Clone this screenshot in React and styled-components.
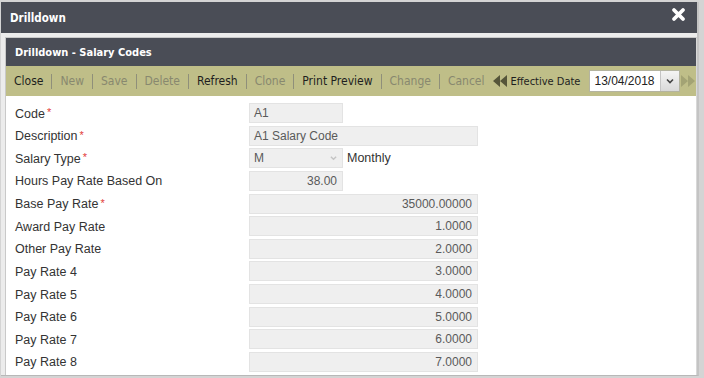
import React from 'react';
import styled, { createGlobalStyle } from 'styled-components';

const GlobalStyle = createGlobalStyle`
  html, body {
    margin: 0;
    padding: 0;
    background: #dcdcdc;
    overflow: hidden;
  }
`;

const Page = styled.div`
  width: 704px;
  height: 378px;
  padding: 2px 0 0 1px;
  box-sizing: border-box;
  background: #d4d4d4;
`;

const Dialog = styled.div`
  width: 698px;
  height: 374px;
  display: flex;
  flex-direction: column;
  background: #ececec;
  border-right: 2px solid #c4c4c4;
  border-bottom: 1px solid #b8b8b8;
  box-sizing: border-box;
`;

const TitleBar = styled.div`
  height: 31px;
  flex: none;
  display: flex;
  align-items: center;
  justify-content: space-between;
  padding: 0 11px 0 9px;
  background: #4a4d56;
  color: #fff;
  font: bold 11.5px "DejaVu Sans Condensed", "DejaVu Sans", sans-serif;
`;

const CloseButton = styled.svg`
  width: 15px;
  height: 15px;
  margin-top: -6px;
`;

const Body = styled.div`
  flex: 1;
  display: flex;
  padding: 4px 0 0 4px;
  min-height: 0;
`;

const Panel = styled.div`
  flex: 1;
  min-width: 0;
  display: flex;
  flex-direction: column;
  background: #fff;
  border: 1px solid #c9c9c9;
  border-bottom: none;
  border-right: 1px solid #d8d8d8;
`;

const PanelHeader = styled.div`
  height: 28px;
  flex: none;
  display: flex;
  align-items: center;
  padding-left: 9px;
  background: #4a4d56;
  color: #fff;
  font: bold 11px "DejaVu Sans Condensed", "DejaVu Sans", sans-serif;
`;

const Toolbar = styled.div`
  height: 30px;
  flex: none;
  display: flex;
  align-items: center;
  padding-left: 8px;
  overflow: hidden;
  white-space: nowrap;
  background: #bfbe88;
  font: 12px "DejaVu Sans Condensed", "DejaVu Sans", sans-serif;

  & > * {
    flex: none;
  }
`;

const ToolButton = styled.span`
  color: ${p => (p.$disabled ? '#88886f' : '#1e1e1e')};
  padding: 0 8px 0 0;
`;

const Separator = styled.span`
  width: 1px;
  height: 15px;
  background: #8f8f7a;
  margin-right: 8px;
`;

const NavArrow = styled.svg`
  width: 14px;
  height: 12px;
  margin-left: ${p => p.$gap}px;
`;

const DateLabel = styled.span`
  font-size: 11px;
  color: #1e1e1e;
  margin: 0 9px 0 3px;
`;

const DateBox = styled.div`
  display: flex;
  height: 22px;
  border: 1px solid #b4b4a0;
  background: #fff;
  box-sizing: border-box;
  margin-right: 1px;
`;

const DateText = styled.span`
  width: 66px;
  padding-left: 4px;
  display: flex;
  align-items: center;
  font: 12px "Liberation Sans", Arial, sans-serif;
  color: #222;
`;

const DateButton = styled.span`
  width: 18px;
  display: flex;
  align-items: center;
  justify-content: center;
  background: linear-gradient(#f4f4f4, #d9d9d9);
  border-left: 1px solid #c4c4c4;
`;

const Form = styled.div`
  display: grid;
  grid-template-columns: 234px 1fr;
  grid-auto-rows: 20px;
  row-gap: 2.64px;
  padding: 7px 0 0 9px;
  font: 12.5px "Liberation Sans", Arial, sans-serif;
  color: #333;
`;

const Label = styled.div`
  display: flex;
  align-items: center;
  margin-top: 1px;
`;

const Required = styled.span`
  color: #e23b3b;
  font-size: 11px;
  margin-left: 2px;
  align-self: flex-start;
  margin-top: 2px;
`;

const Field = styled.div`
  display: flex;
  align-items: center;
`;

const Input = styled.div`
  width: ${p => (p.$wide ? 229 : 94)}px;
  height: 20px;
  box-sizing: border-box;
  display: flex;
  align-items: center;
  justify-content: ${p => (p.$right ? 'flex-end' : 'space-between')};
  padding: 0 5px 0 4px;
  background: #efefef;
  border: 1px solid #e3e3e3;
  color: #5a5a5a;
  font-size: 12px;
`;

const Caption = styled.span`
  margin-left: 4px;
  color: #333;
`;

const Chevron = ({ color, width = 8 }) => (
  <svg width={width} height="6" viewBox="0 0 8 6">
    <path d="M1 1.5 L4 4.5 L7 1.5" fill="none" stroke={color} strokeWidth="1.6" />
  </svg>
);

const DoubleArrow = ({ dir, color, gap = 0 }) => (
  <NavArrow viewBox="0 0 14 12" $gap={gap}>
    {dir === 'left' ? (
      <path d="M7 0 L0 6 L7 12 Z M14 0 L7 6 L14 12 Z" fill={color} />
    ) : (
      <path d="M0 0 L7 6 L0 12 Z M7 0 L14 6 L7 12 Z" fill={color} />
    )}
  </NavArrow>
);

const tools = [
  ['Close', false],
  ['New', true],
  ['Save', true],
  ['Delete', true],
  ['Refresh', false],
  ['Clone', true],
  ['Print Preview', false],
  ['Change', true],
  ['Cancel', true],
];

const rates = [
  ['Base Pay Rate', '35000.00000', true],
  ['Award Pay Rate', '1.0000'],
  ['Other Pay Rate', '2.0000'],
  ['Pay Rate 4', '3.0000'],
  ['Pay Rate 5', '4.0000'],
  ['Pay Rate 6', '5.0000'],
  ['Pay Rate 7', '6.0000'],
  ['Pay Rate 8', '7.0000'],
];

const FieldLabel = ({ children, required }) => (
  <Label>
    {children}
    {required && <Required>*</Required>}
  </Label>
);

export default function App() {
  return (
    <Page>
      <GlobalStyle />
      <Dialog>
        <TitleBar>
          <span>Drilldown</span>
          <CloseButton viewBox="0 0 15 15">
            <path d="M3 3 L12 12 M12 3 L3 12" stroke="#fff" strokeWidth="3.8" strokeLinecap="round" />
          </CloseButton>
        </TitleBar>
        <Body>
          <Panel>
            <PanelHeader>Drilldown - Salary Codes</PanelHeader>
            <Toolbar>
              {tools.map(([name, disabled], i) => (
                <React.Fragment key={name}>
                  {i > 0 && <Separator />}
                  <ToolButton $disabled={disabled}>{name}</ToolButton>
                </React.Fragment>
              ))}
              <DoubleArrow dir="left" color="#55553a" gap={1} />
              <DateLabel>Effective Date</DateLabel>
              <DateBox>
                <DateText>13/04/2018</DateText>
                <DateButton>
                  <Chevron color="#444" />
                </DateButton>
              </DateBox>
              <DoubleArrow dir="right" color="#a3a374" />
            </Toolbar>
            <Form>
              <FieldLabel required>Code</FieldLabel>
              <Field>
                <Input>A1</Input>
              </Field>
              <FieldLabel required>Description</FieldLabel>
              <Field>
                <Input $wide>A1 Salary Code</Input>
              </Field>
              <FieldLabel required>Salary Type</FieldLabel>
              <Field>
                <Input>
                  M
                  <Chevron color="#c4c4c4" width={7} />
                </Input>
                <Caption>Monthly</Caption>
              </Field>
              <FieldLabel>Hours Pay Rate Based On</FieldLabel>
              <Field>
                <Input $right>38.00</Input>
              </Field>
              {rates.map(([label, value, required]) => (
                <React.Fragment key={label}>
                  <FieldLabel required={required}>{label}</FieldLabel>
                  <Field>
                    <Input $wide $right>{value}</Input>
                  </Field>
                </React.Fragment>
              ))}
            </Form>
          </Panel>
        </Body>
      </Dialog>
    </Page>
  );
}
